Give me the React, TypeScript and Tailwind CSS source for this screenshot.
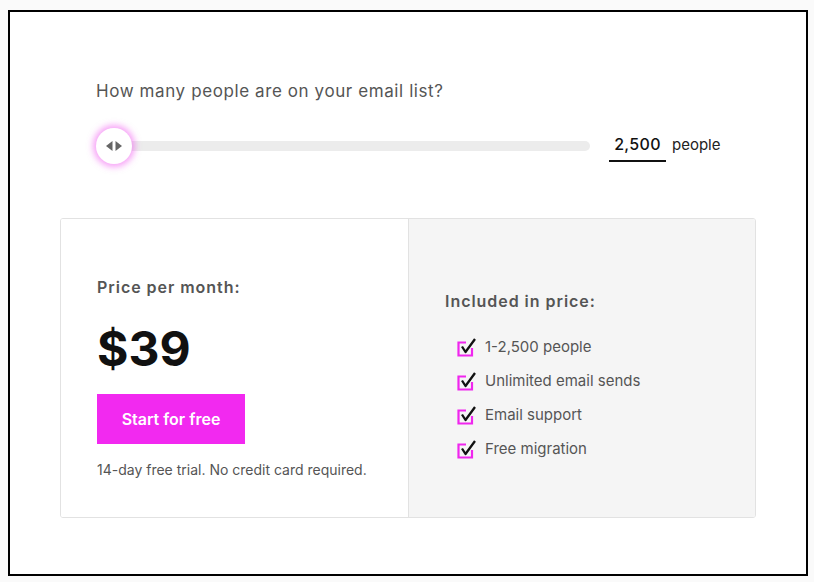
import React from 'react'

const features = [
  '1-2,500 people',
  'Unlimited email sends',
  'Email support',
  'Free migration',
]

function CheckMark() {
  return (
    <svg width="20" height="19" viewBox="0 0 20 19" aria-hidden>
      <path d="M9 4.5H1.5V17.5H15V10" fill="none" stroke="#f026ee" strokeWidth="2.2" />
      <path d="M5 8.5l3.5 5.5L18 1" fill="none" stroke="#111" strokeWidth="2.3" strokeLinejoin="round" />
    </svg>
  )
}

function Slider() {
  return (
    <div className="flex items-center">
      <div className="relative h-[36px] w-[494px]">
        <div className="absolute left-[16px] right-0 top-[13px] h-[10px] rounded-full bg-[#ececec]" />
        <div className="absolute left-0 top-0 flex h-[36px] w-[36px] items-center justify-center rounded-full bg-white shadow-[0_0_6px_3px_rgba(240,70,240,0.5)]">
          <svg width="20" height="12" viewBox="0 0 20 12" aria-hidden>
            <path d="M8.5 1L2 6L8.5 11Z" fill="#666" />
            <path d="M11.5 1L18 6L11.5 11Z" fill="#666" />
          </svg>
        </div>
      </div>
      <div className="ml-[19px] flex items-center">
        <div className="w-[57px] border-b-2 border-[#111] pb-[4px] pt-[2px] text-center text-[16px] font-medium tracking-[0.02em] text-[#111]">
          2,500
        </div>
        <span className="ml-[6px] text-[15px] text-[#222]">people</span>
      </div>
    </div>
  )
}

export default function App() {
  return (
    <div className="min-h-[582px] bg-[#fafafa] pl-[8px] pt-[10px] font-['Inter',sans-serif]">
      <div className="h-[566px] w-[800px] border-2 border-black bg-white">
        <div className="pl-[86px] pt-[67px]">
          <p className="text-[17px] tracking-[0.035em] text-[#555]">How many people are on your email list?</p>
          <div className="mt-[23px]">
            <Slider />
          </div>
        </div>
        <div className="ml-[50px] mt-[54px] flex h-[300px] w-[696px] overflow-hidden rounded-[3px] border border-[#e2e2e2]">
          <div className="w-[348px] border-r border-[#e2e2e2] bg-white pl-[36px] pt-[56px]">
            <p className="text-[16px] font-semibold tracking-[0.06em] text-[#555]">Price per month:</p>
            <p className="mt-[21px] text-[48px] font-bold leading-[58px] text-[#111]">$39</p>
            <button className="mt-[16px] h-[50px] w-[148px] bg-[#f229f0] text-[16px] font-semibold text-white">
              Start for free
            </button>
            <p className="mt-[15px] text-[14px] text-[#555]">14-day free trial. No credit card required.</p>
          </div>
          <div className="flex-1 bg-[#f5f5f5] pl-[36px] pt-[70px]">
            <p className="text-[16px] font-semibold tracking-[0.06em] text-[#555]">Included in price:</p>
            <ul className="mt-[24px] flex flex-col gap-[12px] pl-[12px]">
              {features.map((f) => (
                <li key={f} className="flex h-[22px] items-center gap-[8px] text-[15px] text-[#555]">
                  <CheckMark />
                  {f}
                </li>
              ))}
            </ul>
          </div>
        </div>
      </div>
    </div>
  )
}
